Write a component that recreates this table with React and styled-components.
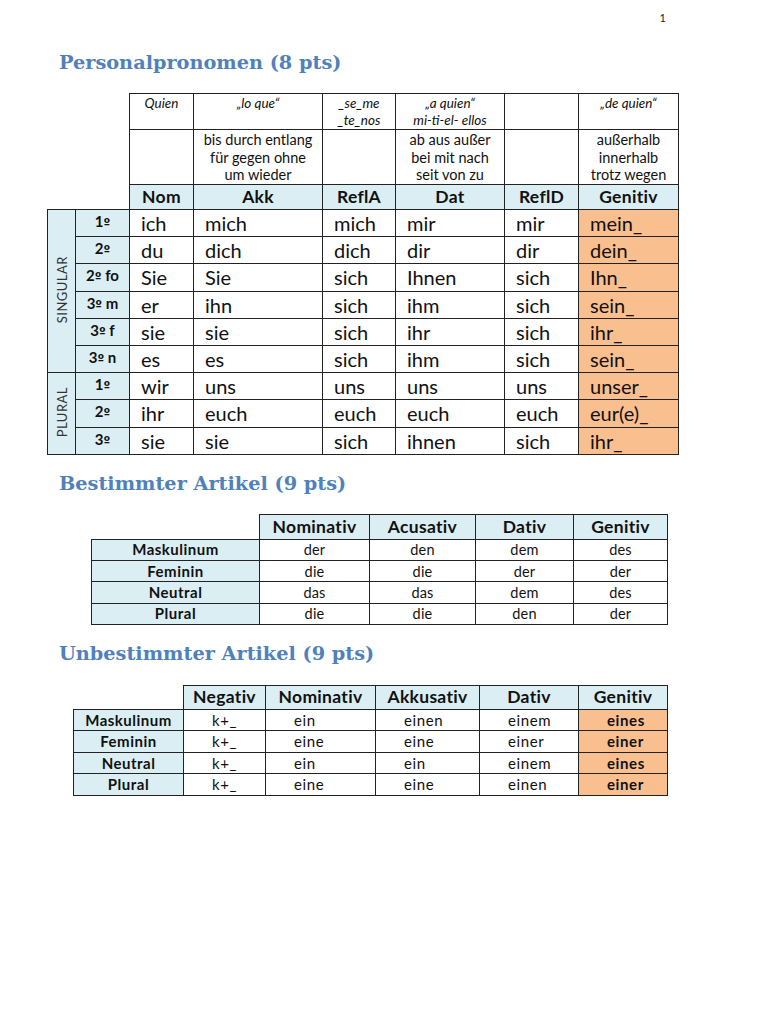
import React from "react";
import styled, { createGlobalStyle } from "styled-components";

const Global = createGlobalStyle`
  html, body { margin: 0; padding: 0; background: #fff; }
  body { font-family: Lato, "Open Sans", Arial, sans-serif; color: #111; }
`;

const Page = styled.div`
  width: 768px;
  min-height: 1024px;
  box-sizing: border-box;
  padding-top: 11px;
  background: #fff;
`;

const PageNum = styled.div`
  text-align: right;
  padding-right: 102px;
  font-size: 11px;
  line-height: 14px;
  color: #222;
`;

const Title = styled.h2`
  margin: ${(p) => p.$mt}px 0 0 59px;
  font-family: "DejaVu Serif", "Liberation Serif", serif;
  font-weight: bold;
  font-size: 19.3px;
  line-height: 28px;
  color: #4f81bd;
`;

const Table = styled.table`
  border-collapse: collapse;
  table-layout: fixed;
  margin: ${(p) => p.$mt}px 0 0 ${(p) => p.$ml}px;
  font-family: Lato, "Open Sans", Arial, sans-serif;
  color: #111;
`;

const Blank = styled.td`
  border: none;
  padding: 0;
`;

const Cell = styled.td`
  border: 1px solid #222;
  padding: 0;
  box-sizing: border-box;
`;

const NoteCell = styled(Cell)`
  vertical-align: top;
  text-align: center;
  font-style: italic;
  font-size: 13.5px;
  line-height: 17px;
  padding-top: 1px;
  height: 36px;
`;

const PrepCell = styled(Cell)`
  vertical-align: top;
  text-align: center;
  font-size: 14.5px;
  line-height: 17.5px;
  padding-top: 1px;
  height: 55px;
`;

const HeadCell = styled(Cell)`
  background: #daeef3;
  text-align: center;
  vertical-align: middle;
  font-weight: bold;
  font-size: ${(p) => p.$size || 17.5}px;
  letter-spacing: 0.3px;
  height: ${(p) => p.$h || 25}px;
  line-height: 20px;
`;

const GroupCell = styled(Cell)`
  background: #daeef3;
  vertical-align: middle;
  text-align: center;
  padding: 0;
`;

const GroupText = styled.div`
  display: inline-block;
  writing-mode: vertical-rl;
  transform: rotate(180deg);
  font-size: 13px;
  letter-spacing: 0.5px;
  line-height: 14px;
  color: #333;
`;

const LabelCell = styled(Cell)`
  background: #daeef3;
  text-align: center;
  vertical-align: top;
  font-weight: bold;
  font-size: 15px;
  line-height: 18px;
  padding-top: 2px;
`;

const Ord = styled.span`
  font-family: "DejaVu Sans", sans-serif;
  font-size: 12px;
  font-weight: bold;
`;

const DataCell = styled(Cell)`
  background: ${(p) => (p.$gen ? "#fabf8f" : "#fff")};
  font-size: 20px;
  line-height: 26px;
  padding-left: 11px;
  height: 27.2px;
  vertical-align: middle;
`;

const RowLabel = styled(Cell)`
  background: #daeef3;
  text-align: center;
  font-weight: bold;
  font-size: 15px;
  letter-spacing: 0.5px;
  line-height: 19px;
  height: ${(p) => p.$h}px;
`;

const SmallCell = styled(Cell)`
  background: ${(p) => (p.$gen ? "#fabf8f" : "#fff")};
  text-align: ${(p) => (p.$left ? "left" : "center")};
  padding-left: ${(p) => (p.$left ? 28 : 0)}px;
  font-size: ${(p) => (p.$left ? 15 : 14.5)}px;
  font-weight: ${(p) => (p.$gen ? "bold" : "normal")};
  letter-spacing: ${(p) => (p.$left ? "0.6px" : "0.2px")};
  line-height: 19px;
`;

const pronounRows = [
  ["1", "", "ich", "mich", "mich", "mir", "mir", "mein_"],
  ["2", "", "du", "dich", "dich", "dir", "dir", "dein_"],
  ["2", " fo", "Sie", "Sie", "sich", "Ihnen", "sich", "Ihn_"],
  ["3", " m", "er", "ihn", "sich", "ihm", "sich", "sein_"],
  ["3", " f", "sie", "sie", "sich", "ihr", "sich", "ihr_"],
  ["3", " n", "es", "es", "sich", "ihm", "sich", "sein_"],
  ["1", "", "wir", "uns", "uns", "uns", "uns", "unser_"],
  ["2", "", "ihr", "euch", "euch", "euch", "euch", "eur(e)_"],
  ["3", "", "sie", "sie", "sich", "ihnen", "sich", "ihr_"],
];

const defRows = [
  ["Maskulinum", "der", "den", "dem", "des"],
  ["Feminin", "die", "die", "der", "der"],
  ["Neutral", "das", "das", "dem", "des"],
  ["Plural", "die", "die", "den", "der"],
];

const indefRows = [
  ["Maskulinum", "k+_", "ein", "einen", "einem", "eines"],
  ["Feminin", "k+_", "eine", "eine", "einer", "einer"],
  ["Neutral", "k+_", "ein", "ein", "einem", "eines"],
  ["Plural", "k+_", "eine", "eine", "einen", "einer"],
];

function Lines({ items }) {
  return items.map((t, i) => (
    <React.Fragment key={i}>
      {i > 0 && <br />}
      {t}
    </React.Fragment>
  ));
}

function PronounTable() {
  const widths = [28, 54, 64, 129, 73, 109, 74, 100];
  return (
    <Table $mt={16} $ml={47}>
      <colgroup>
        {widths.map((w, i) => (
          <col key={i} style={{ width: w }} />
        ))}
      </colgroup>
      <tbody>
        <tr>
          <Blank />
          <Blank />
          <NoteCell>Quien</NoteCell>
          <NoteCell>„lo que“</NoteCell>
          <NoteCell>
            <Lines items={["_se_me", "_te_nos"]} />
          </NoteCell>
          <NoteCell>
            <Lines items={["„a quien“", "mi-ti-el- ellos"]} />
          </NoteCell>
          <NoteCell />
          <NoteCell>„de quien“</NoteCell>
        </tr>
        <tr>
          <Blank />
          <Blank />
          <PrepCell />
          <PrepCell>
            <Lines items={["bis durch entlang", "für gegen ohne", "um wieder"]} />
          </PrepCell>
          <PrepCell />
          <PrepCell>
            <Lines items={["ab aus außer", "bei mit nach", "seit von zu"]} />
          </PrepCell>
          <PrepCell />
          <PrepCell>
            <Lines items={["außerhalb", "innerhalb", "trotz wegen"]} />
          </PrepCell>
        </tr>
        <tr>
          <Blank />
          <Blank />
          {["Nom", "Akk", "ReflA", "Dat", "ReflD", "Genitiv"].map((h) => (
            <HeadCell key={h}>{h}</HeadCell>
          ))}
        </tr>
        {pronounRows.map((r, i) => (
          <tr key={i}>
            {i === 0 && (
              <GroupCell rowSpan={6}>
                <GroupText>SINGULAR</GroupText>
              </GroupCell>
            )}
            {i === 6 && (
              <GroupCell rowSpan={3}>
                <GroupText>PLURAL</GroupText>
              </GroupCell>
            )}
            <LabelCell>
              {r[0]}
              <Ord>º</Ord>
              {r[1]}
            </LabelCell>
            {r.slice(2).map((c, j) => (
              <DataCell key={j} $gen={j === 5}>
                {c}
              </DataCell>
            ))}
          </tr>
        ))}
      </tbody>
    </Table>
  );
}

function DefTable() {
  const widths = [168, 110, 106, 98, 94];
  return (
    <Table $mt={16} $ml={91}>
      <colgroup>
        {widths.map((w, i) => (
          <col key={i} style={{ width: w }} />
        ))}
      </colgroup>
      <tbody>
        <tr>
          <Blank />
          {["Nominativ", "Acusativ", "Dativ", "Genitiv"].map((h) => (
            <HeadCell key={h}>{h}</HeadCell>
          ))}
        </tr>
        {defRows.map((r, i) => (
          <tr key={i}>
            <RowLabel $h={21.3}>{r[0]}</RowLabel>
            {r.slice(1).map((c, j) => (
              <SmallCell key={j}>{c}</SmallCell>
            ))}
          </tr>
        ))}
      </tbody>
    </Table>
  );
}

function IndefTable() {
  const widths = [110, 82, 110, 104, 99, 89];
  return (
    <Table $mt={17} $ml={73}>
      <colgroup>
        {widths.map((w, i) => (
          <col key={i} style={{ width: w }} />
        ))}
      </colgroup>
      <tbody>
        <tr>
          <Blank />
          {["Negativ", "Nominativ", "Akkusativ", "Dativ", "Genitiv"].map((h) => (
            <HeadCell key={h} $h={24}>
              {h}
            </HeadCell>
          ))}
        </tr>
        {indefRows.map((r, i) => (
          <tr key={i}>
            <RowLabel $h={21.5}>{r[0]}</RowLabel>
            {r.slice(1).map((c, j) => (
              <SmallCell key={j} $left $gen={j === 4}>
                {c}
              </SmallCell>
            ))}
          </tr>
        ))}
      </tbody>
    </Table>
  );
}

export default function App() {
  return (
    <>
      <Global />
      <Page>
        <PageNum>1</PageNum>
        <Title $mt={24}>Personalpronomen (8 pts)</Title>
        <PronounTable />
        <Title $mt={15}>Bestimmter Artikel (9 pts)</Title>
        <DefTable />
        <Title $mt={15}>Unbestimmter Artikel (9 pts)</Title>
        <IndefTable />
      </Page>
    </>
  );
}
